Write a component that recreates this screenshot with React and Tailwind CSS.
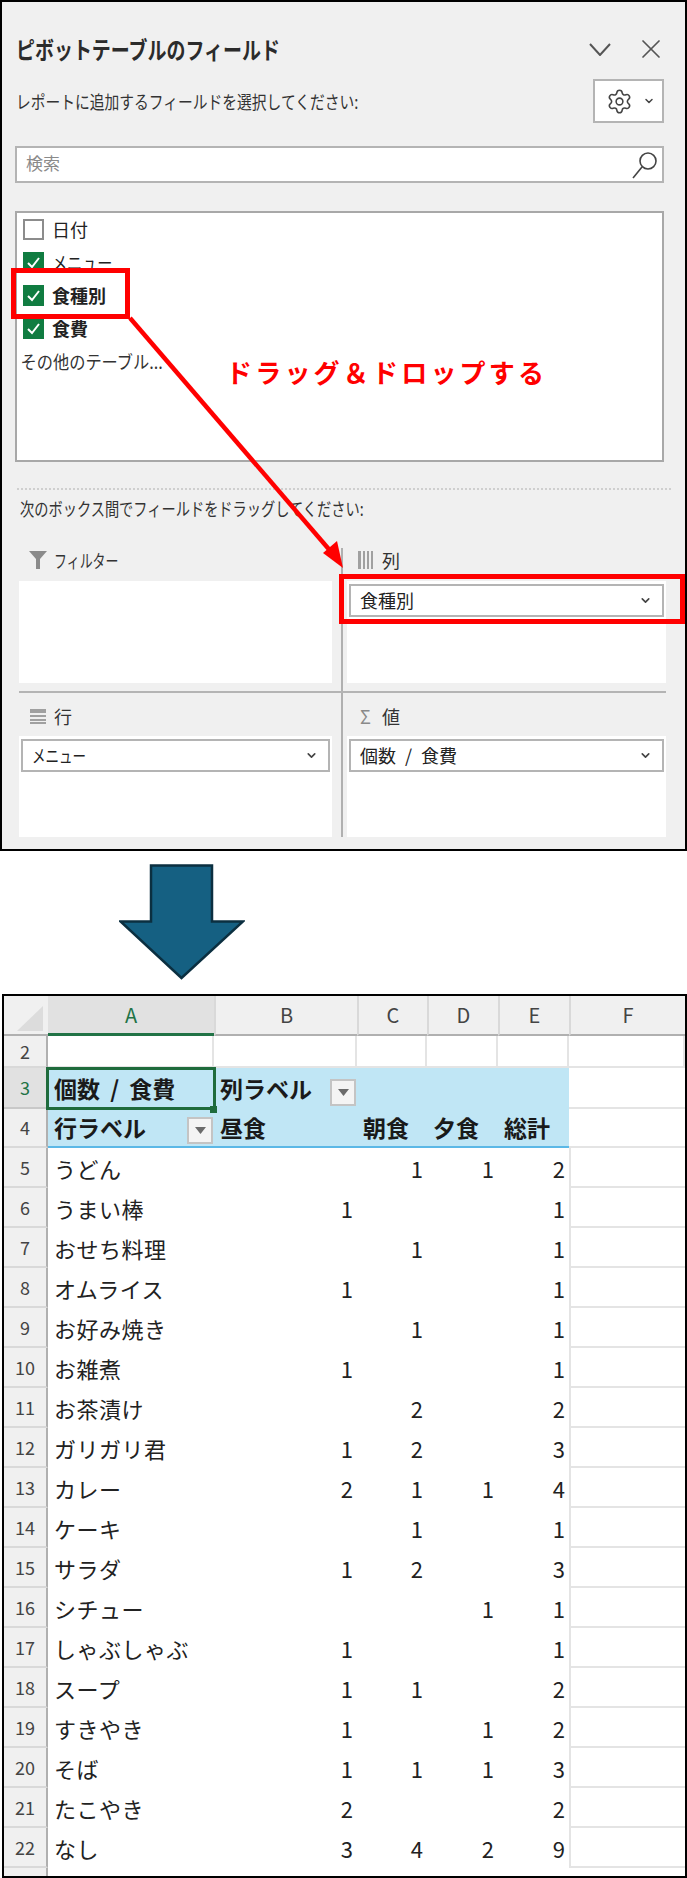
import { Settings, X, ChevronDown } from "lucide-react";

const rows = [
  [5, "うどん", "", "1", "1", "2"],
  [6, "うまい棒", "1", "", "", "1"],
  [7, "おせち料理", "", "1", "", "1"],
  [8, "オムライス", "1", "", "", "1"],
  [9, "お好み焼き", "", "1", "", "1"],
  [10, "お雑煮", "1", "", "", "1"],
  [11, "お茶漬け", "", "2", "", "2"],
  [12, "ガリガリ君", "1", "2", "", "3"],
  [13, "カレー", "2", "1", "1", "4"],
  [14, "ケーキ", "", "1", "", "1"],
  [15, "サラダ", "1", "2", "", "3"],
  [16, "シチュー", "", "", "1", "1"],
  [17, "しゃぶしゃぶ", "1", "", "", "1"],
  [18, "スープ", "1", "1", "", "2"],
  [19, "すきやき", "1", "", "1", "2"],
  [20, "そば", "1", "1", "1", "3"],
  [21, "たこやき", "2", "", "", "2"],
  [22, "なし", "3", "4", "2", "9"],
];

const columns = "grid grid-cols-[44px_166px_143px_70px_71px_71px_1fr]";

function Check({ on }) {
  return on ? (
    <span className="flex h-[21px] w-[21px] items-center justify-center bg-[#107c41]">
      <svg width="15" height="13" viewBox="0 0 15 13" fill="none" stroke="#fff" strokeWidth="2">
        <path d="M2 7l4 4 7-9" />
      </svg>
    </span>
  ) : (
    <span className="h-[21px] w-[21px] border-2 border-[#8c8c8c] bg-white"></span>
  );
}

function Field({ on, label, bold, squeeze }) {
  return (
    <div className="flex h-[33px] items-center gap-[8px] pl-[6px]">
      <Check on={on} />
      <span className={`inline-block -translate-y-px text-[18px] leading-none text-[#222] ${bold ? "font-bold" : ""} ${squeeze ? "origin-left scale-x-[0.84]" : ""}`}>{label}</span>
    </div>
  );
}

function Select({ label, squeeze }) {
  return (
    <div className="flex h-[33px] items-center justify-between border-2 border-[#b4b4b4] bg-white pl-[9px] pr-[10px] text-[18px] text-[#222] [word-spacing:5px]">
      <span className={squeeze ? "inline-block origin-left scale-x-[0.75]" : ""}>{label}</span>
      <ChevronDown size={13} strokeWidth={3} color="#444" />
    </div>
  );
}

function AreaHead({ icon, label }) {
  return (
    <div className="flex items-center text-[18px] leading-none text-[#333]">
      <span className="flex w-[35px] justify-center pl-[2px]">{icon}</span>
      <span>{label}</span>
    </div>
  );
}

function FilterButton() {
  return (
    <span className="absolute bottom-[2px] right-[1px] flex h-[27px] w-[26px] items-center justify-center border-2 border-[#c4c4c4] bg-[#f4f4f4]">
      <svg width="11" height="7" viewBox="0 0 11 7">
        <path d="M0 0h11L5.5 7z" fill="#6b6b6b" />
      </svg>
    </span>
  );
}

function RowHead({ n, active }) {
  return (
    <div
      className={`flex items-center justify-center border-b-2 border-r-2 text-[18px] ${
        active ? "border-b-[#c8c8c8] border-r-[#b0b0b0] bg-[#e1e1e1] text-[#217346]" : "border-b-[#d9d9d9] border-r-[#b0b0b0] bg-[#f0f0f0] text-[#444]"
      }`}
    >
      {n}
    </div>
  );
}

function Num({ v }) {
  return <div className="flex items-center justify-end pr-[4px] text-[22px] text-[#222]">{v}</div>;
}

export default function App() {
  return (
    <div className="w-[687px] bg-white font-['Noto_Sans_CJK_JP','Noto_Sans',sans-serif]">
      {/* field list pane */}
      <div className="relative h-[851px] border-2 border-black bg-[#f0f0f0]">
        <div className="mt-[35px] flex h-[24px] items-center justify-between pl-[14px] pr-[18px]">
          <span className="origin-left scale-x-[0.79] whitespace-nowrap text-[24px] font-bold leading-none text-[#2b2b2b]">ピボットテーブルのフィールド</span>
          <div className="flex items-center gap-[24px]">
            <svg width="22" height="13" viewBox="0 0 22 13" fill="none" stroke="#555" strokeWidth="2">
              <path d="M1 1l10 11L21 1" />
            </svg>
            <X size={32} strokeWidth={1.3} color="#555" />
          </div>
        </div>

        <div className="mt-[18px] flex h-[44px] items-center justify-between pl-[14px] pr-[21px]">
          <span className="origin-left scale-x-[0.82] whitespace-nowrap text-[18px] leading-none text-[#333]">レポートに追加するフィールドを選択してください:</span>
          <div className="flex h-[44px] w-[71px] items-center justify-center gap-[10px] border-2 border-[#b4b4b4] bg-white pl-[4px]">
            <Settings size={27} strokeWidth={1.4} color="#444" />
            <ChevronDown size={12} strokeWidth={3} color="#444" />
          </div>
        </div>

        <div className="ml-[13px] mr-[21px] mt-[23px] flex h-[37px] items-center justify-between border-2 border-[#b4b4b4] bg-white pl-[9px] pr-[4px]">
          <span className="pb-[4px] text-[17px] leading-none text-[#8a8a8a]">検索</span>
          <svg width="27" height="28" viewBox="0 0 27 28" fill="none" stroke="#444" strokeWidth="1.6">
            <circle cx="17" cy="10" r="8" />
            <path d="M11 16L2 27" />
          </svg>
        </div>

        <div className="ml-[13px] mr-[21px] mt-[28px] h-[251px] border-2 border-[#a8a8a8] bg-white">
          <Field label="日付" />
          <Field on squeeze label="メニュー" />
          <Field on bold label="食種別" />
          <Field on bold label="食費" />
          <div className="flex h-[33px] origin-left scale-x-[0.9] items-center whitespace-nowrap pl-[4px] text-[18px] text-[#333]">その他のテーブル...</div>
        </div>

        <div className="ml-[15px] mr-[14px] mt-[26px] border-t-2 border-dotted border-[#cfcfcf]"></div>
        <div className="ml-[18px] mt-[6px] flex h-[24px] origin-left scale-x-[0.79] items-center whitespace-nowrap text-[18px] leading-none text-[#333]">次のボックス間でフィールドをドラッグしてください:</div>

        <div className="ml-[17px] mr-[19px] mt-[28px]">
          <div className="flex h-[143px]">
            <div className="w-[313px]">
              <div className="flex h-[33px] items-start pt-[3px]">
                <AreaHead
                  label={<span className="inline-block origin-left scale-x-[0.72]">フィルター</span>}
                  icon={
                    <svg width="18" height="18" viewBox="0 0 18 18">
                      <path d="M0 0h18L11 8v10H7V8z" fill="#8a8a8a" />
                    </svg>
                  }
                />
              </div>
              <div className="h-[102px] bg-white"></div>
            </div>
            <div className="ml-[9px] mr-[4px] w-[2px] bg-[#b0b0b0]"></div>
            <div className="flex-1">
              <div className="flex h-[33px] items-start pt-[3px]">
                <AreaHead
                  label="列"
                  icon={
                    <svg width="16" height="18" viewBox="0 0 16 18" fill="#a0a0a0">
                      <path d="M0 0h3v18H0zM5 0h2v18H5zM9 0h2v18H9zM13 0h2v18h-2z" />
                    </svg>
                  }
                />
              </div>
              <div className="h-[102px] bg-white pl-[2px] pr-[2px] pt-[3px]">
                <Select label="食種別" />
              </div>
            </div>
          </div>

          <div className="h-[2px] bg-[#b4b4b4]"></div>

          <div className="flex h-[144px]">
            <div className="w-[313px]">
              <div className="flex h-[43px] items-center pt-[3px]">
                <AreaHead
                  label="行"
                  icon={
                    <svg width="16" height="15" viewBox="0 0 16 15" fill="#a0a0a0">
                      <path d="M0 0h16v4H0zM0 6h16v2H0zM0 10h16v2H0zM0 13h16v2H0z" />
                    </svg>
                  }
                />
              </div>
              <div className="h-[101px] bg-white pl-[2px] pr-[2px] pt-[3px]">
                <Select squeeze label="メニュー" />
              </div>
            </div>
            <div className="ml-[9px] mr-[4px] w-[2px] bg-[#b0b0b0]"></div>
            <div className="flex-1">
              <div className="flex h-[43px] items-center pt-[3px]">
                <AreaHead label="値" icon={<span className="text-[18px] leading-none text-[#8a8a8a]">Σ</span>} />
              </div>
              <div className="h-[101px] bg-white pl-[2px] pr-[2px] pt-[3px]">
                <Select label="個数 / 食費" />
              </div>
            </div>
          </div>
        </div>

        {/* annotations */}
        <div className="absolute left-[9px] top-[266px] h-[51px] w-[119px] border-[5px] border-[#ff0000]"></div>
        <div className="absolute left-[337px] top-[572px] h-[50px] w-[346px] border-[5px] border-[#ff0000]"></div>
        <span className="absolute left-[224px] top-[352px] whitespace-nowrap text-[26px] font-bold leading-[36px] tracking-[3.2px] text-[#ff0000]">ドラッグ＆ドロップする</span>
        <svg className="absolute left-[126px] top-[314px]" width="222" height="256" viewBox="0 0 222 256" fill="none">
          <path d="M2 2L205 238" stroke="#ff0000" strokeWidth="4.5" />
          <path d="M215 252L195 237L209 225z" fill="#ff0000" />
        </svg>
      </div>

      {/* down arrow */}
      <svg className="ml-[119px] mt-[13px] block" width="126" height="116" viewBox="0 0 126 116">
        <path d="M32 1.5h61v56h31L62.5 114 1.5 57.5H32z" fill="#156082" stroke="#0b2f40" strokeWidth="2.5" />
      </svg>

      {/* sheet */}
      <div className="ml-[2px] mt-[14px] h-[884px] overflow-hidden border-2 border-black bg-white">
        <div className={`${columns} h-[40px]`}>
          <div className="relative border-b-2 border-[#b0b0b0] bg-[#f0f0f0]">
            <svg className="absolute left-[13px] top-[10px]" width="26" height="25" viewBox="0 0 26 25">
              <path d="M26 0v25H0z" fill="#dcdcdc" />
            </svg>
          </div>
          <div className="flex items-center justify-center border-b-[3px] border-[#217346] bg-[#e1e1e1] text-[20px] text-[#217346]">A</div>
          {["B", "C", "D", "E", "F"].map((c) => (
            <div key={c} className="flex items-center justify-center border-b-2 border-l-2 border-[#b0b0b0] border-l-[#d9d9d9] bg-[#f0f0f0] text-[20px] text-[#444]">
              {c}
            </div>
          ))}
        </div>

        <div className={`${columns} h-[32px]`}>
          <RowHead n={2} />
          {[0, 1, 2, 3, 4, 5].map((i) => (
            <div key={i} className="border-b-2 border-r-2 border-[#e4e4e4]"></div>
          ))}
        </div>

        <div className={`${columns} h-[41px]`}>
          <RowHead n={3} active />
          <div className="relative col-span-5 flex">
            <div className="relative z-10 flex w-[166px] items-center bg-[#c0e6f5] pl-[6px] text-[23px] font-bold leading-none text-[#1a1a1a] [word-spacing:5px]">
              個数 / 食費
              <span className="absolute -inset-x-[2px] -inset-y-[1px] border-[3px] border-[#1e6b3c]"></span>
              <span className="absolute -bottom-[4px] -right-[3px] h-[7px] w-[7px] bg-[#1e6b3c]"></span>
            </div>
            <div className="relative flex flex-1 items-center bg-[#c0e6f5] pl-[6px] text-[23px] font-bold leading-none text-[#1a1a1a]">
              列ラベル
              <span className="absolute left-[116px] top-[11px] flex h-[27px] w-[26px] items-center justify-center border-2 border-[#c4c4c4] bg-[#f4f4f4]">
                <svg width="11" height="7" viewBox="0 0 11 7">
                  <path d="M0 0h11L5.5 7z" fill="#6b6b6b" />
                </svg>
              </span>
            </div>
          </div>
          <div className="border-b-2 border-[#e4e4e4]"></div>
        </div>

        <div className={`${columns} h-[39px]`}>
          <RowHead n={4} />
          <div className="relative flex items-center border-b-2 border-[#5bb8e6] bg-[#c0e6f5] pl-[6px] text-[23px] font-bold leading-none text-[#1a1a1a]">
            行ラベル
            <FilterButton />
          </div>
          {["昼食", "朝食", "夕食", "総計"].map((h) => (
            <div key={h} className="flex items-center border-b-2 border-[#5bb8e6] bg-[#c0e6f5] pl-[6px] text-[23px] font-bold leading-none text-[#1a1a1a]">
              {h}
            </div>
          ))}
          <div className="border-b-2 border-[#e4e4e4]"></div>
        </div>

        {rows.map((r) => (
          <div key={r[0]} className={`${columns} h-[40px]`}>
            <RowHead n={r[0]} />
            <div className="flex items-center whitespace-nowrap pl-[6px] text-[22px] tracking-[0.5px] text-[#222]">{r[1]}</div>
            <Num v={r[2]} />
            <Num v={r[3]} />
            <Num v={r[4]} />
            <Num v={r[5]} />
            <div className="border-b-2 border-l-2 border-[#e4e4e4]"></div>
          </div>
        ))}

        <div className={`${columns} h-[8px]`}>
          <div className="border-r-2 border-[#b0b0b0] bg-[#f0f0f0]"></div>
        </div>
      </div>
    </div>
  );
}
